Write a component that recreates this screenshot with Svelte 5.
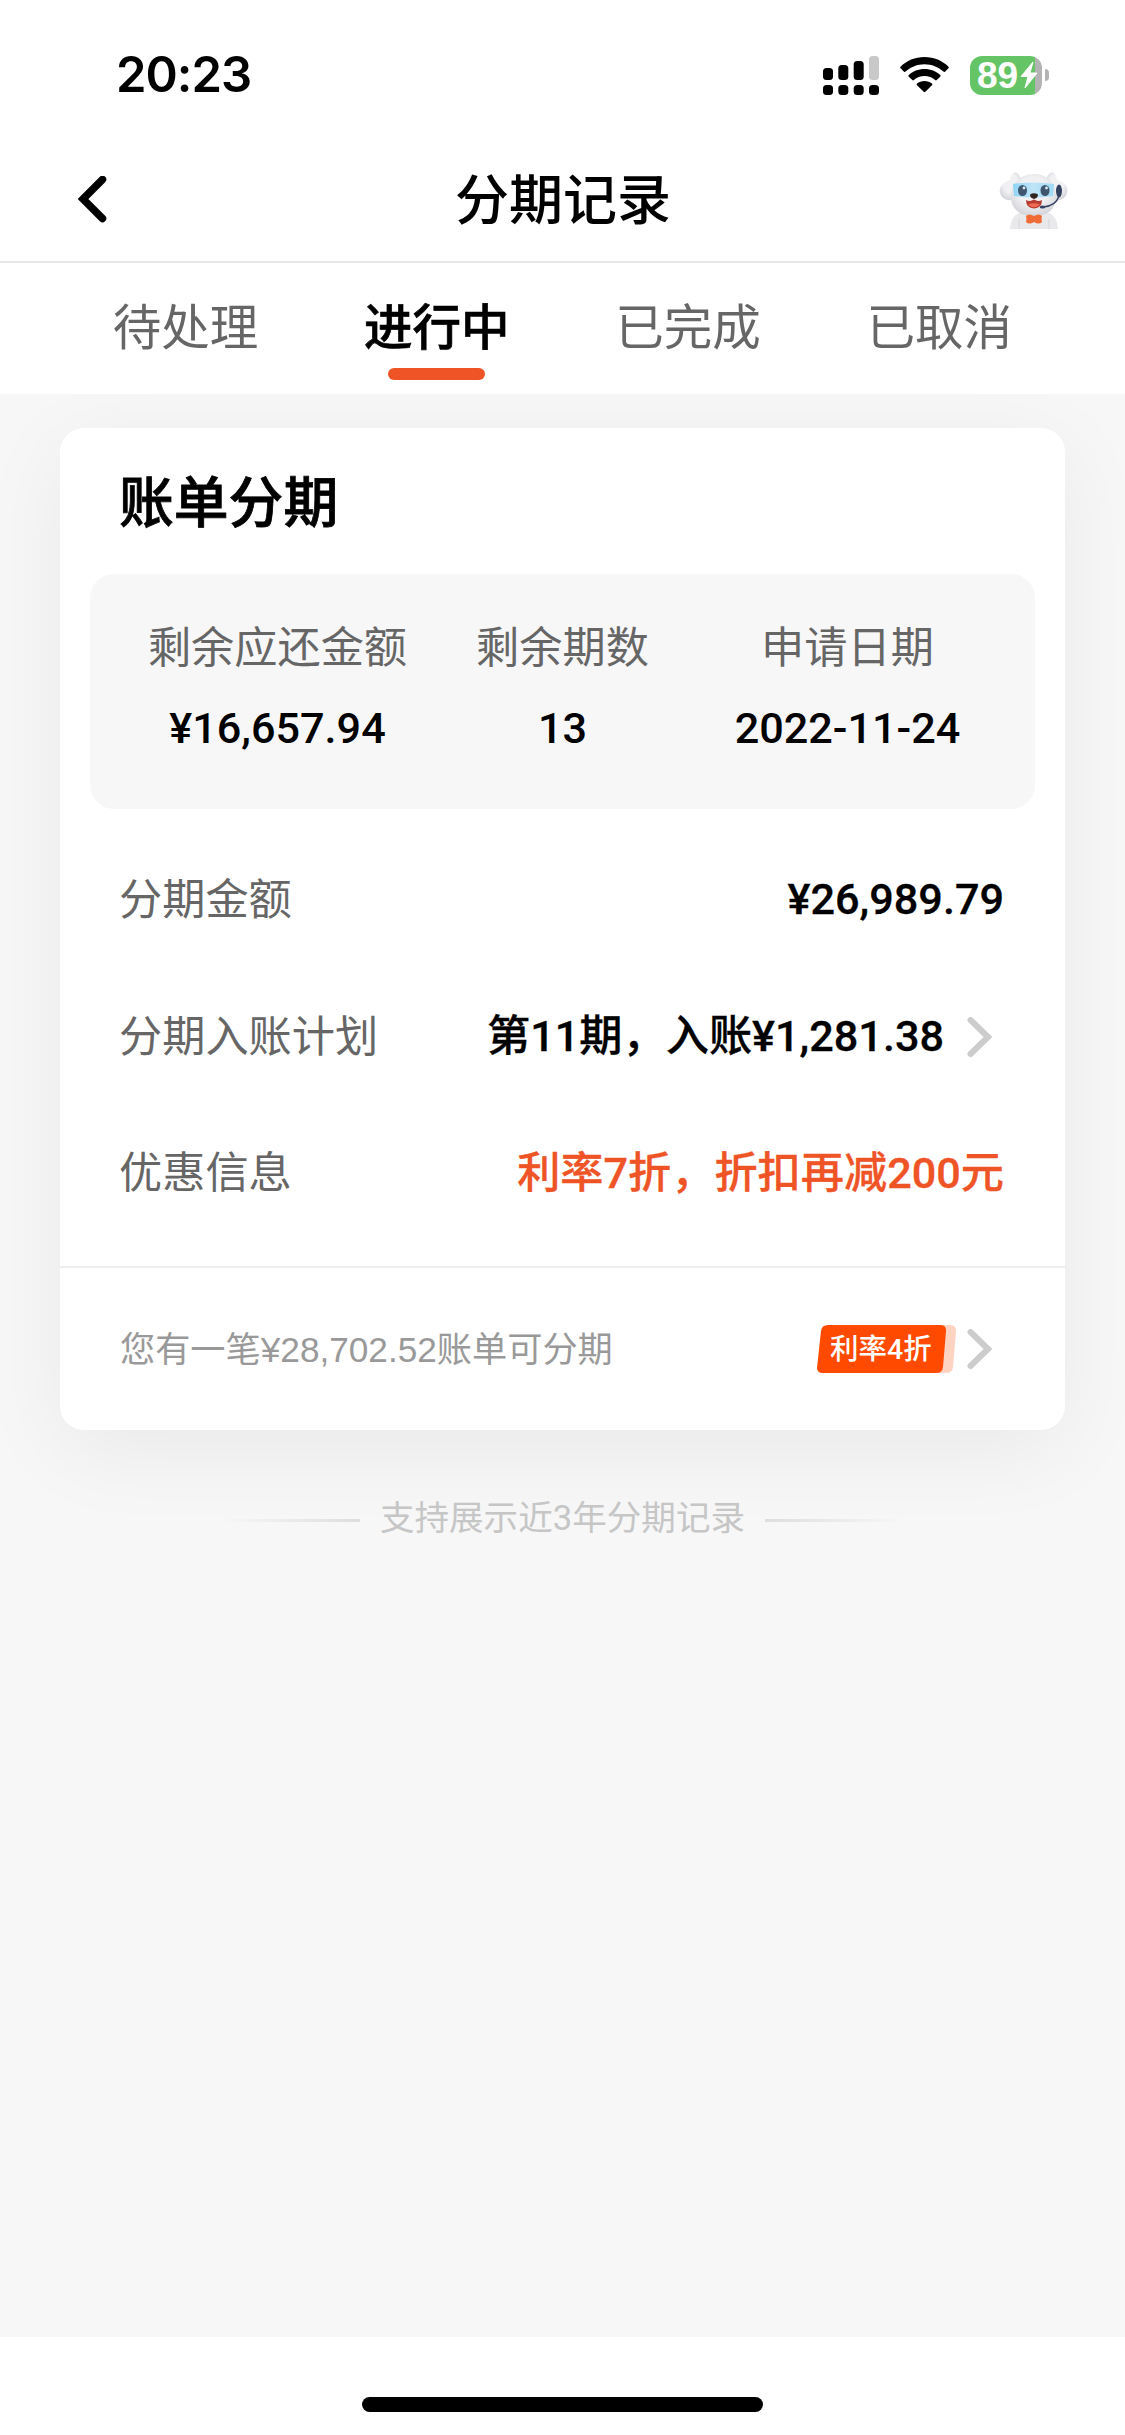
<script>
	const tabs = ['待处理', '进行中', '已完成', '已取消'];
	let activeTab = $state(1);

	const summary = [
		{ label: '剩余应还金额', value: '¥16,657.94' },
		{ label: '剩余期数', value: '13' },
		{ label: '申请日期', value: '2022-11-24' }
	];

	const rows = [
		{ label: '分期金额', value: '¥26,989.79' },
		{ label: '分期入账计划', value: '第11期，入账¥1,281.38', link: true },
		{ label: '优惠信息', value: '利率7折，折扣再减200元', accent: true }
	];

	const watermark = 'P23100620230435753';
	const watermarkTops = [273, 423, 1321, 2073];
</script>

{#snippet arrow()}
	<svg class="arrow" width="26" height="42" viewBox="0 0 26 42">
		<path d="M3.5 4 L21 21 L3.5 38" />
	</svg>
{/snippet}

<div class="page">
	<div class="status-bar">
		<span class="time">20:23</span>
		<div class="status-icons">
			<svg class="signal" width="56" height="39" viewBox="0 0 56 39">
				<rect x="0" y="12" width="10" height="12" rx="3.5" />
				<rect x="15.3" y="9" width="10" height="15" rx="3.5" />
				<rect x="30.7" y="5" width="10" height="19" rx="3.5" />
				<rect x="46" y="0" width="10" height="24" rx="3.5" fill="#c9c9c9" />
				<rect x="0" y="29" width="10" height="10" rx="3.5" />
				<rect x="15.3" y="29" width="10" height="10" rx="3.5" />
				<rect x="30.7" y="29" width="10" height="10" rx="3.5" />
				<rect x="46" y="29" width="10" height="10" rx="3.5" />
			</svg>
			<svg class="wifi" width="49" height="36" viewBox="0 0 49 36">
				<path d="M24.5 0 C34 0 42.5 3.7 48.5 9.7 Q49.2 10.5 48.4 11.3 L45 14.7 Q44.2 15.4 43.4 14.6 C38.3 9.9 31.7 7.2 24.5 7.2 C17.3 7.2 10.7 9.9 5.6 14.6 Q4.8 15.4 4 14.7 L0.6 11.3 Q-0.2 10.5 0.5 9.7 C6.5 3.7 15 0 24.5 0 Z" />
				<path d="M24.5 12 C30.7 12 36.2 14.3 40.3 18.1 Q41 18.9 40.2 19.7 L36.7 23.1 Q35.9 23.8 35.1 23.1 C32.3 20.6 28.6 19.1 24.5 19.1 C20.4 19.1 16.7 20.6 13.9 23.1 Q13.1 23.8 12.3 23.1 L8.8 19.7 Q8 18.9 8.7 18.1 C12.8 14.3 18.3 12 24.5 12 Z" />
				<path d="M24.5 24 C27.4 24 30 25 32 26.6 Q32.8 27.4 32 28.2 L25.3 34.8 Q24.5 35.6 23.7 34.8 L17 28.2 Q16.2 27.4 17 26.6 C19 25 21.6 24 24.5 24 Z" />
			</svg>
			<div class="battery">
				<span class="battery-level">89</span>
				<svg width="18" height="28" viewBox="0 0 18 28">
					<path d="M13 1 L1 15.5 H8 L5 27 L17 12 H10 Z" fill="#fff" stroke="#fff" stroke-width="1" stroke-linejoin="round" />
				</svg>
			</div>
			<div class="battery-cap"></div>
		</div>
	</div>

	<header class="nav-bar">
		<svg class="back" width="32" height="48" viewBox="0 0 32 48">
			<path d="M25.5 3.5 L6 23 L25.5 42.5" />
		</svg>
		<h1>分期记录</h1>
		<svg class="mascot" width="70" height="60" viewBox="0 0 70 60">
			<defs>
				<radialGradient id="fur" cx="0.5" cy="0.4" r="0.65">
					<stop offset="0.5" stop-color="#f1f1f4" />
					<stop offset="1" stop-color="#d0d1d7" />
				</radialGradient>
				<linearGradient id="visor" x1="0" x2="1">
					<stop offset="0" stop-color="#8fd4f5" />
					<stop offset="0.5" stop-color="#c0e5f7" />
					<stop offset="1" stop-color="#9dd8f5" />
				</linearGradient>
			</defs>
			<path d="M11 59 Q12 46 20 43 H50 Q58 46 59 59 Z" fill="#e9e9ec" />
			<path d="M20 49 V59 M50 49 V59" stroke="#d5d5da" stroke-width="1" />
			<path d="M22 9 Q18 0 14 3 Q11 6 11 10 Q-1 14 1 23 Q4 33 17 29 Z" fill="url(#fur)" />
			<path d="M47 9 Q51 0 55 3 Q58 6 58 10 Q70 14 68 23 Q65 33 52 29 Z" fill="url(#fur)" />
			<path d="M35 4 C49 4 57 14 57 27 C57 39 49 46 35 46 C21 46 12 39 12 27 C12 14 21 4 35 4 Z" fill="url(#fur)" />
			<path d="M14 14 Q35 11 55 14 L54 26 Q35 29 15 26 Z" fill="url(#visor)" />
			<ellipse cx="23.5" cy="20.5" rx="4.5" ry="5.5" fill="#40566f" />
			<ellipse cx="46" cy="20.5" rx="4.5" ry="5.5" fill="#40566f" />
			<circle cx="25" cy="18" r="1.4" fill="#d8edf8" />
			<circle cx="47.5" cy="18" r="1.4" fill="#d8edf8" />
			<path d="M31 24.5 Q35 22 39 24.5 Q39 28 35 29 Q31 28 31 24.5 Z" fill="#302321" />
			<path d="M27 30 Q31 32 35 29.5 Q39 32 43 30 Q43 38 35 38.5 Q27 38 27 30 Z" fill="#b63b30" />
			<path d="M29 34.5 Q35 32 41 34.5 Q35 40 29 34.5 Z" fill="#f06a52" />
			<path d="M60 26 Q57 36 44 37" fill="none" stroke="#34415f" stroke-width="1.4" />
			<ellipse cx="60" cy="21" rx="3" ry="6.5" fill="#34415f" />
			<ellipse cx="43.5" cy="37" rx="2.8" ry="1.5" fill="#34415f" />
			<path d="M27 46 Q30 43 35 46 Q40 43 43 46 Q42 49 43 52 Q40 55 35 52 Q30 55 27 52 Q28 49 27 46 Z" fill="#f06b35" />
		</svg>
	</header>

	<nav class="tabs">
		{#each tabs as tab, i}
			<button class="tab" class:active={i === activeTab} onclick={() => (activeTab = i)}>
				{tab}
			</button>
		{/each}
	</nav>

	<main>
		<section class="card">
			<h2>账单分期</h2>

			<div class="summary">
				{#each summary as item}
					<div class="summary-item">
						<span class="label">{item.label}</span>
						<span class="value">{item.value}</span>
					</div>
				{/each}
			</div>

			<div class="rows">
				{#each rows as row}
					<div class="row">
						<span class="label">{row.label}</span>
						<span class="value" class:accent={row.accent}>{row.value}</span>
						{#if row.link}
							{@render arrow()}
						{/if}
					</div>
				{/each}
			</div>

			<div class="offer">
				<span class="offer-text">您有一笔¥28,702.52账单可分期</span>
				<div class="badge">
					<svg width="140" height="48" viewBox="0 0 140 48">
						<path d="M20 0 H133 Q139.5 0 139 6 L136 42 Q135.4 48 129 48 H20 Z" fill="#ffd3c2" />
						<path d="M11 0 H123 Q129.5 0 129 6 L126 42 Q125.4 48 119 48 H6 Q-0.5 48 0.1 42 L4 6 Q4.8 0 11 0 Z" fill="#ff4a00" />
					</svg>
					<span>利率4折</span>
				</div>
				{@render arrow()}
			</div>
		</section>

		<p class="tip">支持展示近3年分期记录</p>
	</main>

	<footer>
		<div class="home-indicator"></div>
	</footer>

	{#each watermarkTops as top}
		<span class="watermark" style="top: {top}px">{watermark}</span>
	{/each}
</div>

<style>
	:global(body) {
		background: #fff;
	}

	.page {
		position: relative;
		display: flex;
		flex-direction: column;
		width: 1125px;
		height: 2435px;
		overflow: hidden;
		background: #fff;
		color: #000;
		font-family: Roboto, 'Noto Sans CJK SC', sans-serif;
	}

	/* status bar */
	.status-bar {
		display: flex;
		justify-content: space-between;
		align-items: center;
		box-sizing: border-box;
		height: 150px;
		padding: 0 76px 0 116px;
	}
	.time {
		font-family: Inter, sans-serif;
		font-size: 49px;
		font-weight: 600;
		line-height: 60px;
		letter-spacing: -1px;
	}
	.status-icons {
		display: flex;
		align-items: center;
	}
	.wifi {
		margin: 0 21px;
	}
	.battery {
		display: flex;
		align-items: center;
		box-sizing: border-box;
		width: 72px;
		height: 39px;
		padding-left: 7px;
		border-radius: 12px;
		background: linear-gradient(to right, #65c466 65px, #b3b3b3 65px);
	}
	.battery-level {
		width: 43px;
		color: #fff;
		font-family: 'Liberation Sans', sans-serif;
		font-size: 37px;
		font-weight: 700;
		line-height: 39px;
	}
	.battery-cap {
		width: 4px;
		height: 12px;
		margin-left: 3px;
		border-radius: 0 6px 6px 0;
		background: #b3b3b3;
	}

	/* title bar */
	.nav-bar {
		display: flex;
		justify-content: space-between;
		align-items: center;
		box-sizing: border-box;
		height: 113px;
		padding: 0 56px 12px 77px;
		border-bottom: 2px solid #e6e6e6;
	}
	.back {
		width: 32px;
		margin-right: 18px;
	}
	.back path {
		fill: none;
		stroke: #000;
		stroke-width: 7.5;
		stroke-linecap: round;
	}
	h1 {
		margin: 0;
		padding-top: 5px;
		font-size: 54px;
		font-weight: 500;
		line-height: 70px;
	}

	.tabs {
		display: flex;
		height: 131px;
		padding: 0 60px;
	}
	.tab {
		display: flex;
		flex: 1;
		flex-direction: column;
		align-items: center;
		padding: 32px 0 0;
		border: 0;
		background: none;
		color: #666;
		font: 400 48.5px/68px Roboto, 'Noto Sans CJK SC', sans-serif;
	}
	.tab.active {
		color: #000;
		font-weight: 500;
		-webkit-text-stroke: 0.7px #000;
	}
	.tab.active::after {
		content: '';
		width: 97px;
		height: 12px;
		margin-top: 5px;
		border-radius: 6px;
		background: #ef5427;
	}

	main {
		flex: 1;
		padding: 34px 60px 0;
		overflow: hidden;
		background: #f7f7f7;
	}

	.card {
		height: 1002px;
		border-radius: 24px;
		background: #fff;
		box-shadow: 0 20px 90px rgba(0, 0, 0, 0.06);
	}
	.card h2 {
		margin: 0;
		padding: 38px 59px 34px;
		font-size: 54.8px;
		font-weight: 500;
		line-height: 74px;
		-webkit-text-stroke: 0.8px #000;
	}

	.summary {
		display: flex;
		box-sizing: border-box;
		height: 235px;
		margin: 0 30px;
		padding: 45px 45px 0;
		border-radius: 24px;
		background: #f7f7f7;
	}
	.summary-item {
		display: flex;
		flex: 1;
		flex-direction: column;
		align-items: center;
		gap: 20px;
	}
	.label {
		color: #666;
		font-size: 43.2px;
		line-height: 60px;
	}
	.value {
		font-size: 43.2px;
		font-weight: 500;
		line-height: 60px;
	}

	.rows {
		padding: 23px 61px 24px 59px;
	}
	.row {
		display: flex;
		align-items: center;
		height: 136.5px;
	}
	.row .label {
		padding-top: 2px;
	}
	.row .value {
		margin-left: auto;
		-webkit-text-stroke: 0.3px #000;
	}
	.row .value.accent {
		padding-top: 1px;
		color: #ef5427;
		-webkit-text-stroke-color: #ef5427;
	}
	.arrow {
		flex: none;
		margin: 0 11px 0 23px;
	}
	.arrow path {
		fill: none;
		stroke: #ccc;
		stroke-width: 6;
		stroke-linecap: round;
	}

	.offer {
		display: flex;
		align-items: center;
		height: 161px;
		padding: 1px 61px 0 60px;
		border-top: 2px solid #eee;
	}
	.offer-text {
		padding-top: 1px;
		color: #999;
		font-family: 'Liberation Sans', 'Noto Sans CJK SC', sans-serif;
		font-size: 35.2px;
		line-height: 50px;
		white-space: nowrap;
	}
	.badge {
		display: grid;
		flex: none;
		margin-left: auto;
	}
	.badge > * {
		grid-area: 1 / 1;
	}
	.badge span {
		padding: 1px 0 0 13px;
		color: #fff;
		font-size: 28.5px;
		font-weight: 500;
		line-height: 47px;
	}
	.offer .arrow {
		margin-left: 10px;
	}

	.tip {
		display: flex;
		justify-content: center;
		align-items: center;
		gap: 20px;
		margin: 62px 0 0;
		color: #c6c6c6;
		font-size: 34.6px;
		line-height: 52px;
	}
	.tip::before,
	.tip::after {
		content: '';
		width: 138px;
		height: 3px;
		margin-top: 5px;
		background: linear-gradient(to left, #dedede, transparent);
	}
	.tip::after {
		background: linear-gradient(to right, #dedede, transparent);
	}

	footer {
		display: flex;
		justify-content: center;
		box-sizing: border-box;
		height: 98px;
		padding-top: 60px;
		background: #fff;
	}
	.home-indicator {
		width: 401px;
		height: 15px;
		border-radius: 8px;
		background: #000;
	}

	/* faint trace id laid over the whole page */
	.watermark {
		position: absolute;
		left: 1px;
		color: rgba(110, 120, 60, 0.025);
		font-size: 43px;
		line-height: 46px;
		letter-spacing: 5px;
		pointer-events: none;
	}
</style>
